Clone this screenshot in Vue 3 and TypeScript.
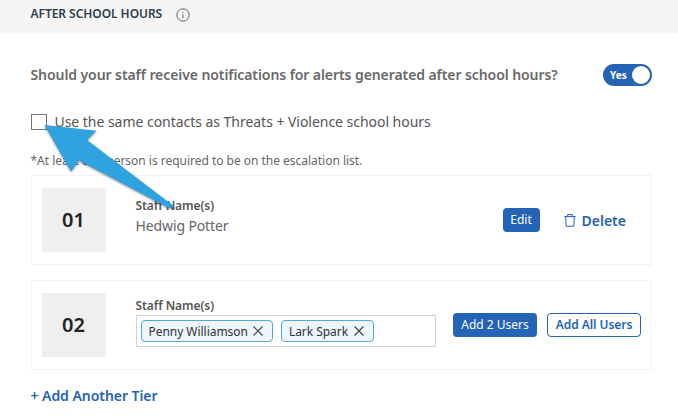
<template>
  <div class="after-hours">
    <header class="section-header">
      <h3>AFTER SCHOOL HOURS</h3>
      <svg
        class="info-icon"
        viewBox="0 0 14 14"
      >
        <circle
          cx="7"
          cy="7"
          r="6.2"
        />
        <path d="M7 6.2V10.2M7 3.8V4.9" />
      </svg>
    </header>

    <main class="section-body">
      <div class="question-row">
        <span class="question">Should your staff receive notifications for alerts generated after school hours?</span>
        <button
          class="toggle"
          :class="{ off: !enabled }"
          @click="enabled = !enabled"
        >
          <span class="toggle-label">{{ enabled ? 'Yes' : 'No' }}</span>
          <span class="knob" />
        </button>
      </div>

      <label class="same-contacts">
        <input
          v-model="sameContacts"
          type="checkbox"
        >
        <span>Use the same contacts as Threats + Violence school hours</span>
      </label>

      <p class="hint">
        *At least one person is required to be on the escalation list.
      </p>

      <div
        v-for="(tier, index) in tiers"
        :key="index"
        class="tier"
      >
        <div class="tier-number">
          {{ formatNumber(index) }}
        </div>

        <div
          class="tier-staff"
          :class="{ view: !tier.editing }"
        >
          <div class="staff-label">
            Staff Name(s)
          </div>
          <div
            v-if="tier.editing"
            class="staff-select"
          >
            <span
              v-for="name in tier.staff"
              :key="name"
              class="tag"
            >
              <span class="tag-name">{{ name }}</span>
              <svg
                class="tag-remove"
                viewBox="0 0 10 10"
                @click="removeStaff(tier, name)"
              >
                <path d="M0.5 0.5L9.5 9.5M9.5 0.5L0.5 9.5" />
              </svg>
            </span>
          </div>
          <div
            v-else
            class="staff-names"
          >
            {{ tier.staff.join(', ') }}
          </div>
        </div>

        <div
          v-if="tier.editing"
          class="tier-actions"
        >
          <button
            class="btn primary add-some"
            @click="tier.editing = false"
          >
            Add {{ tier.staff.length }} Users
          </button>
          <button class="btn outline">
            Add All Users
          </button>
        </div>
        <div
          v-else
          class="tier-actions view"
        >
          <button
            class="btn primary edit"
            @click="tier.editing = true"
          >
            Edit
          </button>
          <button
            class="delete"
            @click="tiers.splice(index, 1)"
          >
            <svg
              class="trash-icon"
              viewBox="0 0 12 13"
            >
              <path d="M0.3 2.6H11.7M3.6 2.4V0.6H8.4V2.4M1.7 2.8L2.2 12.3H9.8L10.3 2.8" />
            </svg>
            <span>Delete</span>
          </button>
        </div>
      </div>

      <button
        class="add-tier"
        @click="addTier"
      >
        + Add Another Tier
      </button>
    </main>

    <!-- Pointer to the checkbox -->
    <svg
      class="pointer-arrow"
      viewBox="0 0 140 95"
    >
      <path d="M4.5 5L56.3 10.8L47 20L133 85.5Q132.5 88.5 129 88L39 40.5L31 51.5Z" />
    </svg>
  </div>
</template>

<script setup lang="ts">
import { ref } from 'vue'

interface Tier {
  staff: string[]
  editing: boolean
}

const enabled = ref(true)
const sameContacts = ref(false)

const tiers = ref<Tier[]>([
  { staff: ['Hedwig Potter'], editing: false },
  { staff: ['Penny Williamson', 'Lark Spark'], editing: true }
])

const formatNumber = (index: number) => String(index + 1).padStart(2, '0')

const removeStaff = (tier: Tier, name: string) => {
  tier.staff = tier.staff.filter(item => item !== name)
}

const addTier = () => {
  tiers.value.push({ staff: [], editing: true })
}
</script>

<style>
body {
  background: #fff;
}
</style>

<style scoped>
.after-hours {
  position: relative;
  height: 417px;
  overflow: hidden;
  background: #fff;
  color: #555;
  font-family: "Noto Sans", "Open Sans", sans-serif;
}

button {
  margin: 0;
  padding: 0;
  border: none;
  background: none;
  font-family: inherit;
  white-space: nowrap;
  cursor: pointer;
}

.section-header {
  display: flex;
  align-items: center;
  box-sizing: border-box;
  height: 33px;
  padding: 0 0 5px 30.5px;
  background: #f5f5f5;
}

.section-header h3 {
  margin: 0;
  width: 132.5px;
  color: #2b3e4c;
  font-size: 12px;
  font-weight: 600;
  letter-spacing: -0.05px;
  line-height: 18px;
  white-space: nowrap;
}

.info-icon {
  width: 14px;
  height: 14px;
  margin: 2px 0 0 13px;
  fill: none;
  stroke: #666;
  stroke-width: 1;
}

.section-body {
  padding: 31px 26px 0 31px;
}

.question-row {
  display: flex;
  justify-content: space-between;
  align-items: center;
  height: 22px;
}

.question {
  margin: -2px 0 0 -0.5px;
  font-size: 14px;
  font-weight: 600;
  letter-spacing: -0.08px;
  color: #696969;
  white-space: nowrap;
}

.toggle {
  display: flex;
  justify-content: space-between;
  align-items: center;
  box-sizing: border-box;
  width: 49px;
  height: 22px;
  padding: 0 2px 0 7px;
  border-radius: 11px;
  background: #2463b5;
  color: #fff;
}

.toggle.off {
  background: #999;
}

.toggle-label {
  font-size: 10px;
  font-weight: 700;
}

.knob {
  width: 18px;
  height: 18px;
  border-radius: 50%;
  background: #fff;
}

.same-contacts {
  display: flex;
  align-items: center;
  gap: 7.5px;
  height: 20px;
  margin-top: 26px;
  font-size: 14px;
  letter-spacing: -0.035px;
  white-space: nowrap;
}

.same-contacts span {
  margin-top: -2px;
}

.same-contacts input {
  appearance: none;
  box-sizing: border-box;
  width: 16px;
  height: 16px;
  margin: 0;
  border: 1px solid #757575;
  background: #fff;
}

.same-contacts input:checked {
  background: #2463b5;
}

.hint {
  margin: 20px 0 6px -0.5px;
  font-size: 12px;
  letter-spacing: -0.02px;
  line-height: 17px;
  color: #666;
}

.tier {
  display: flex;
  box-sizing: border-box;
  height: 90px;
  margin-bottom: 15px;
  padding: 12px 10px;
  border: 1px solid #f3f3f3;
}

.tier-number {
  width: 64px;
  height: 64px;
  background: #efefef;
  color: #222;
  font-size: 20px;
  font-weight: 600;
  line-height: 64px;
  text-align: center;
  text-indent: -1px;
}

.tier-staff {
  width: 300px;
  margin: 4px 0 0 30px;
}

.tier-staff.view {
  margin-top: 9px;
}

.staff-label {
  margin-left: -0.5px;
  font-size: 12px;
  font-weight: 600;
  letter-spacing: -0.06px;
  line-height: 18px;
}

.staff-names {
  margin: 1px 0 0 -0.5px;
  font-size: 14px;
  letter-spacing: -0.12px;
  line-height: 20px;
  color: #666;
}

.staff-select {
  display: flex;
  align-items: center;
  gap: 8px;
  box-sizing: border-box;
  height: 32px;
  padding: 0 4px;
  border: 1px solid #d2d2d2;
}

.tag {
  display: flex;
  justify-content: space-between;
  align-items: center;
  box-sizing: border-box;
  height: 22px;
  padding: 0 9px 0 6.5px;
  gap: 5.5px;
  border: 1px solid #55a7df;
  border-radius: 4px;
  background: #edf6fe;
  color: #333;
  font-size: 12px;
  letter-spacing: -0.04px;
}

.tag-remove {
  width: 10px;
  height: 10px;
  fill: none;
  stroke: #444;
  stroke-width: 1.2;
  cursor: pointer;
}

.tier-actions {
  display: flex;
  flex: 1;
  justify-content: flex-end;
  gap: 10px;
  margin-top: 20px;
}

.tier-actions.view {
  gap: 24px;
  padding-right: 15px;
}

.btn {
  box-sizing: border-box;
  height: 24px;
  padding-bottom: 1px;
  border-radius: 4px;
  font-size: 12px;
}

.btn.primary {
  background: #2463b5;
  color: #fff;
}

.btn.edit {
  width: 37px;
}

.btn.add-some {
  width: 84px;
}

.btn.outline {
  width: 94px;
  border: 1px solid #2463b5;
  background: #fff;
  color: #2463b5;
  font-weight: 600;
  letter-spacing: -0.05px;
}

.delete {
  display: flex;
  align-items: center;
  gap: 6px;
  height: 24px;
  color: #2463b5;
  font-size: 14px;
  font-weight: 600;
}

.trash-icon {
  width: 12px;
  height: 13px;
  fill: none;
  stroke: #2463b5;
  stroke-width: 1;
}

.add-tier {
  display: block;
  height: 22px;
  margin-left: -0.5px;
  color: #2463b5;
  font-size: 14px;
  font-weight: 600;
  letter-spacing: -0.05px;
  line-height: 22px;
}

.pointer-arrow {
  position: absolute;
  top: 120px;
  left: 40px;
  width: 140px;
  height: 95px;
  fill: #2fa3df;
  filter: drop-shadow(0 1px 1px rgba(0, 0, 0, 0.45));
  pointer-events: none;
}
</style>
